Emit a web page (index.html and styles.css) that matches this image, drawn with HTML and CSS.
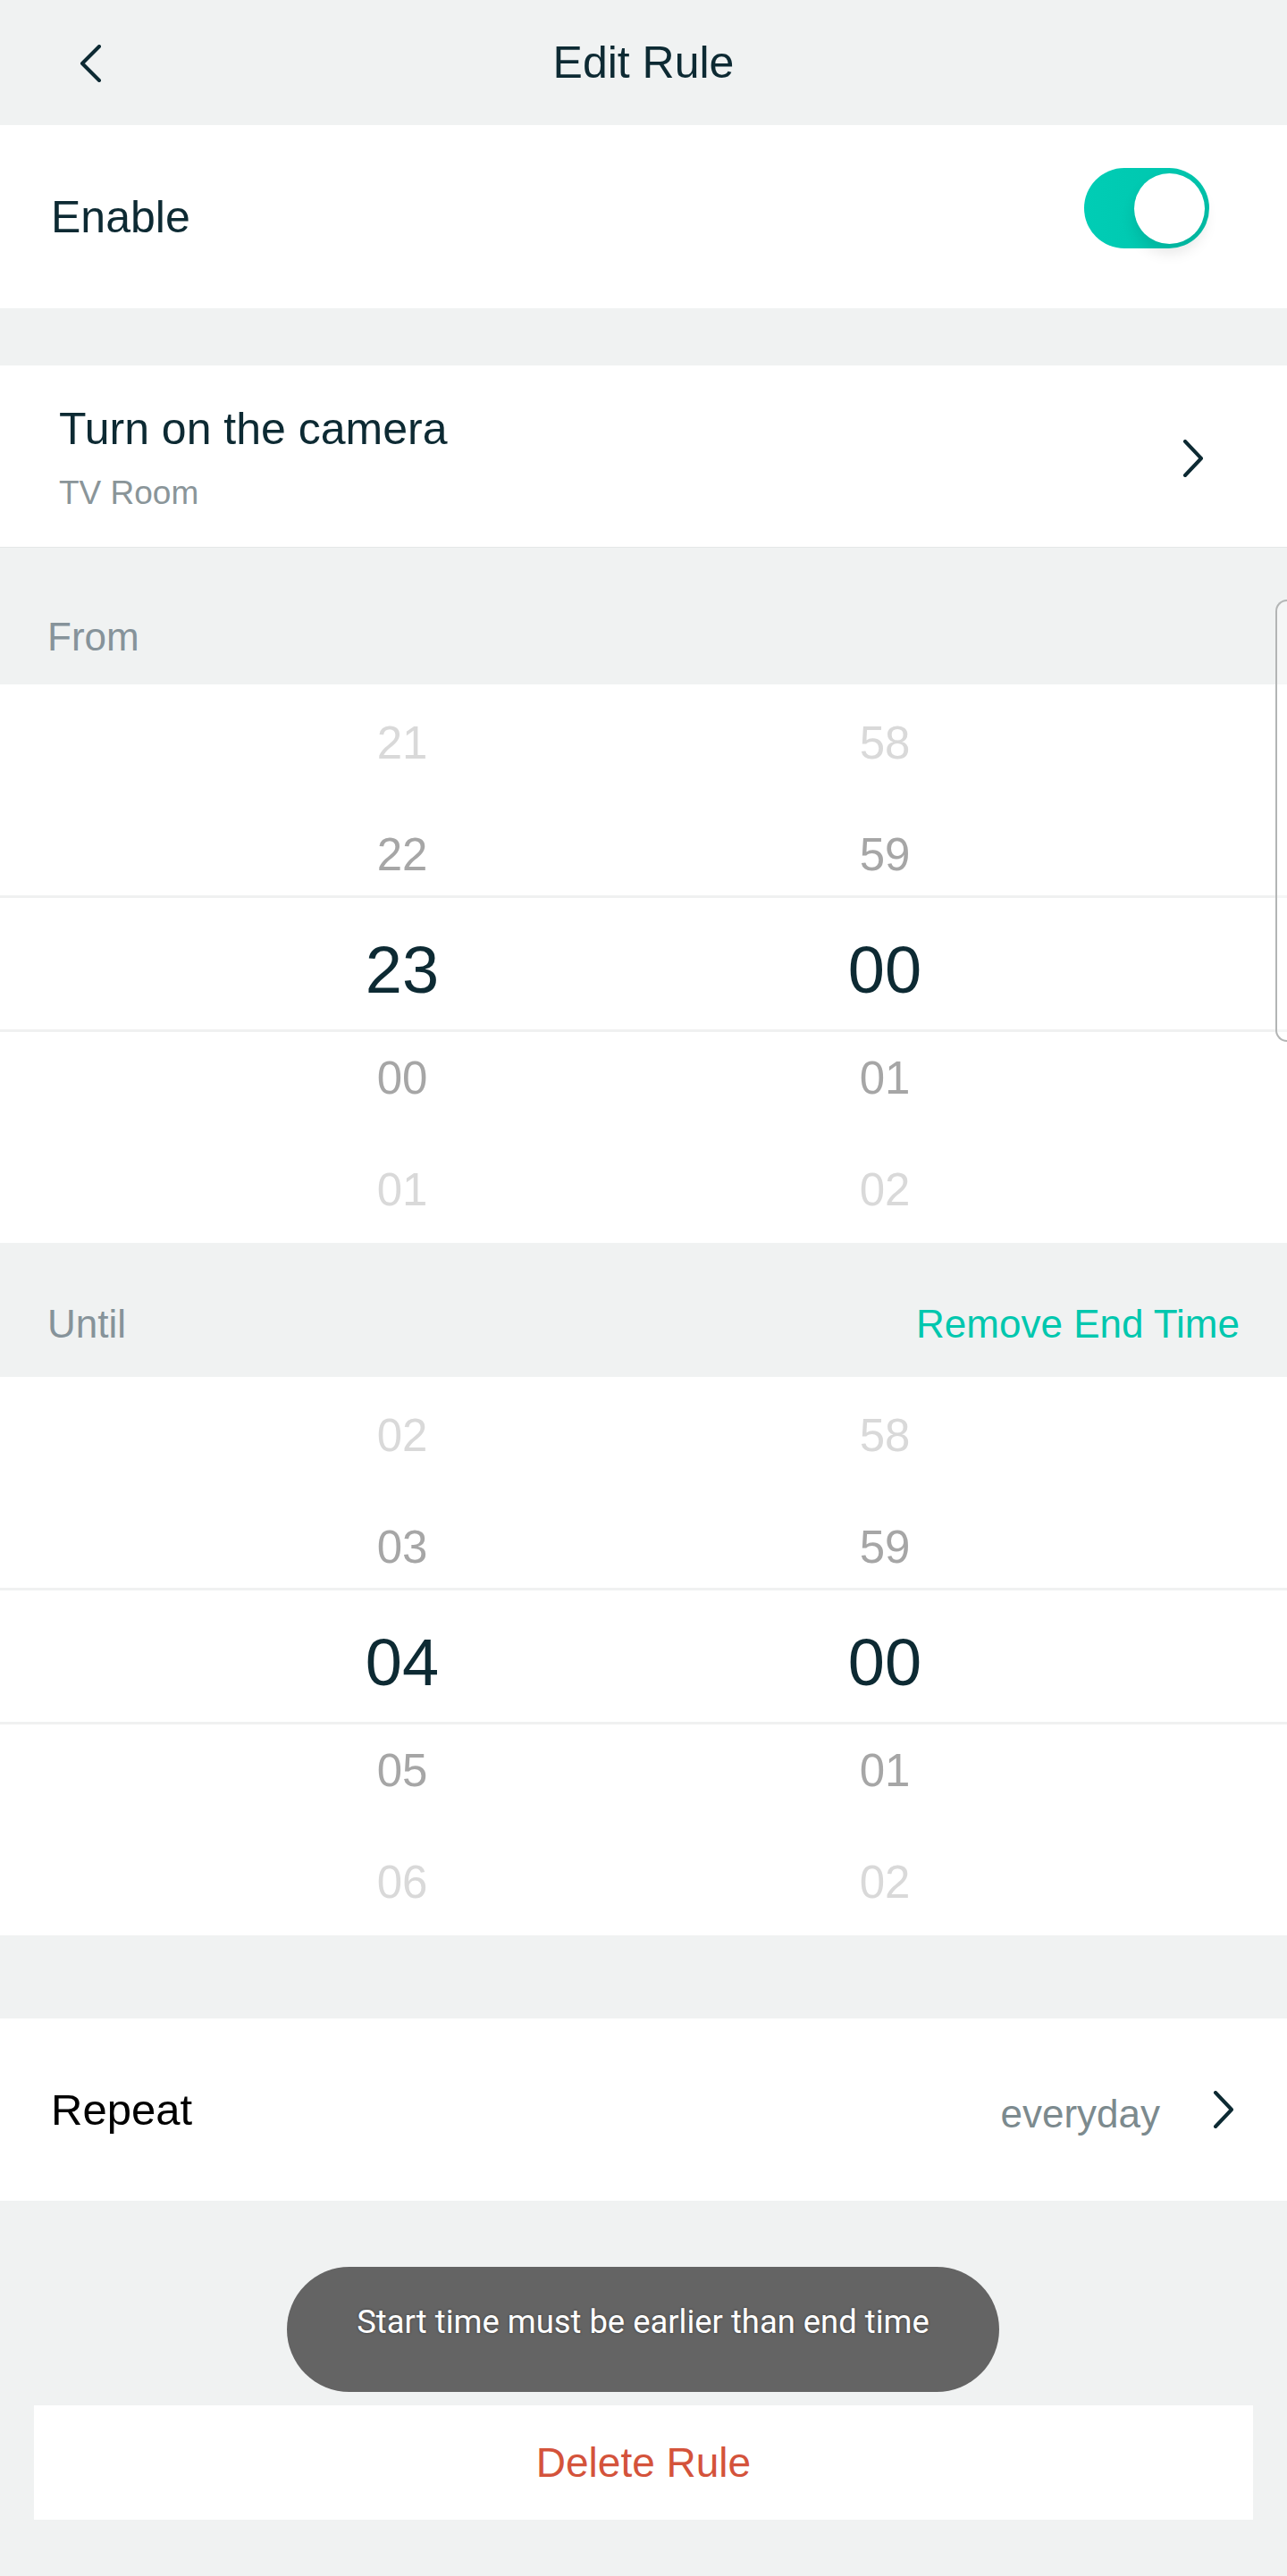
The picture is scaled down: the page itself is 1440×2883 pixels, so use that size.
FILE: index.html
```html
<!DOCTYPE html>
<html lang="en">
<head>
<meta charset="utf-8">
<title>Edit Rule</title>
<link rel="stylesheet" href="styles.css">
</head>
<body>
<div class="screen">
  <header class="topbar">
    <svg class="back" width="26" height="42" viewBox="0 0 26 42"><path d="M22 2 L3 21 L22 40" fill="none" stroke="#0d2a33" stroke-width="4" stroke-linecap="round" stroke-linejoin="round"/></svg>
    <h1 class="title">Edit Rule</h1>
    <span></span>
  </header>

  <section class="card enable-row">
    <span class="row-title">Enable</span>
    <div class="toggle"><div class="knob"></div></div>
  </section>

  <section class="card action-row">
    <div class="action-text">
      <div class="row-title">Turn on the camera</div>
      <div class="subtitle">TV Room</div>
    </div>
    <svg class="chev" width="26" height="42" viewBox="0 0 26 42"><path d="M4 2 L22 21 L4 40" fill="none" stroke="#0d2a33" stroke-width="4" stroke-linecap="round" stroke-linejoin="round"/></svg>
  </section>

  <div class="label-row from-label"><span class="label">From</span></div>

  <div class="picker">
    <div class="col">
      <div class="cell far">21</div>
      <div class="cell near">22</div>
      <div class="cell sel">23</div>
      <div class="cell near">00</div>
      <div class="cell far">01</div>
    </div>
    <div class="col">
      <div class="cell far">58</div>
      <div class="cell near">59</div>
      <div class="cell sel">00</div>
      <div class="cell near">01</div>
      <div class="cell far">02</div>
    </div>
    <div class="sel-line top"></div>
    <div class="sel-line bottom"></div>
  </div>

  <div class="label-row until-label"><span class="label">Until</span><span class="link">Remove End Time</span></div>

  <div class="picker">
    <div class="col">
      <div class="cell far">02</div>
      <div class="cell near">03</div>
      <div class="cell sel">04</div>
      <div class="cell near">05</div>
      <div class="cell far">06</div>
    </div>
    <div class="col">
      <div class="cell far">58</div>
      <div class="cell near">59</div>
      <div class="cell sel">00</div>
      <div class="cell near">01</div>
      <div class="cell far">02</div>
    </div>
    <div class="sel-line top"></div>
    <div class="sel-line bottom"></div>
  </div>

  <section class="card repeat-row">
    <span class="repeat-title">Repeat</span>
    <div class="repeat-value">
      <span class="value">everyday</span>
      <svg class="chev" width="26" height="42" viewBox="0 0 26 42"><path d="M4 2 L22 21 L4 40" fill="none" stroke="#0d2a33" stroke-width="4" stroke-linecap="round" stroke-linejoin="round"/></svg>
    </div>
  </section>

  <div class="delete">Delete Rule</div>

  <div class="toast">Start time must be earlier than end time</div>
  <div class="edge-handle"></div>
</div>
</body>
</html>
```

FILE: styles.css
```css
* { box-sizing: border-box; }

html, body {
  margin: 0;
  padding: 0;
  background: #f0f2f2;
}

body {
  font-family: "Liberation Sans", Arial, sans-serif;
  color: #0d2a33;
}

.screen {
  position: relative;
  width: 1440px;
  min-height: 2883px;
  background: #f0f2f2;
}

.topbar {
  height: 140px;
  display: grid;
  grid-template-columns: 1fr auto 1fr;
  align-items: center;
}

.back {
  margin-left: 89px;
  margin-top: 2px;
}

.title {
  margin: 0;
  font-size: 50px;
  font-weight: 400;
  line-height: 60px;
  color: #0d2a33;
}

.card {
  background: #ffffff;
}

.row-title {
  font-size: 50px;
  line-height: 60px;
  color: #0d2a33;
}

.enable-row {
  height: 205px;
  display: flex;
  align-items: center;
  justify-content: space-between;
  padding: 0 87px 0 57px;
}

.toggle {
  width: 140px;
  height: 90px;
  border-radius: 45px;
  background: linear-gradient(90deg, #00cdb5 0%, #00c8b0 60%, #00c2aa 100%);
  margin-bottom: 19px;
  display: flex;
  align-items: center;
  justify-content: flex-end;
  padding-right: 5px;
}

.knob {
  width: 79px;
  height: 79px;
  border-radius: 50%;
  background: #ffffff;
  box-shadow: 0 10px 16px rgba(0, 0, 0, 0.10);
}

.action-row {
  margin-top: 64px;
  height: 204px;
  border-bottom: 1px solid #e4e7e7;
  display: flex;
  align-items: flex-start;
  justify-content: space-between;
  padding: 41px 92px 0 66px;
}

.action-text {
  display: flex;
  flex-direction: column;
  gap: 20px;
}

.subtitle {
  font-size: 37px;
  line-height: 44px;
  color: #8a9599;
}

.action-row .chev {
  margin-top: 42px;
}

.label-row {
  display: flex;
  align-items: flex-end;
  justify-content: space-between;
  padding-left: 53px;
  padding-right: 53px;
}

.from-label {
  height: 153px;
  padding-bottom: 27px;
}

.until-label {
  height: 150px;
  padding-bottom: 33px;
}

.label {
  font-size: 44px;
  line-height: 52px;
  color: #86939a;
}

.link {
  font-size: 44px;
  line-height: 52px;
  color: #00c7ae;
}

.picker {
  position: relative;
  height: 625px;
  background: #ffffff;
  display: grid;
  grid-template-columns: 1fr 1fr;
  padding: 0 180px;
}

.col {
  display: flex;
  flex-direction: column;
}

.cell {
  height: 125px;
  text-align: center;
  padding-top: 6px;
  line-height: 119px;
  font-size: 51px;
}

.cell.far { color: #d9d9d9; }
.cell.near { color: #a6a6a6; }

.cell.sel {
  padding-top: 14px;
  line-height: 111px;
  font-size: 74px;
  color: #0d2a33;
}

.sel-line {
  position: absolute;
  left: 0;
  right: 0;
  height: 3px;
  background: #f0f1f1;
}

.sel-line.top { top: 236px; }
.sel-line.bottom { top: 386px; }

.repeat-row {
  margin-top: 93px;
  height: 204px;
  display: flex;
  align-items: center;
  justify-content: space-between;
  padding: 0 58px 0 57px;
}

.repeat-title {
  font-size: 49px;
  line-height: 60px;
  color: #000000;
}

.repeat-value {
  display: flex;
  align-items: center;
  gap: 58px;
}

.value {
  font-size: 44px;
  line-height: 52px;
  color: #7c8a8e;
  margin-top: 10px;
}

.delete {
  margin: 229px 38px 0;
  height: 128px;
  background: #ffffff;
  display: flex;
  align-items: center;
  justify-content: center;
  font-size: 46px;
  color: #d4533b;
}

.toast {
  position: absolute;
  left: 321px;
  top: 2537px;
  width: 797px;
  height: 140px;
  border-radius: 70px;
  background: #646464;
  color: #ffffff;
  font-family: Roboto, "Liberation Sans", sans-serif;
  font-size: 36.4px;
  display: flex;
  align-items: center;
  justify-content: center;
  padding-bottom: 18px;
  text-shadow: 0 0 3px rgba(0, 0, 0, 0.45);
}

.edge-handle {
  position: absolute;
  right: 0;
  top: 671px;
  width: 13px;
  height: 495px;
  border: 2px solid #b3b5b5;
  border-right: none;
  border-radius: 14px 0 0 14px;
  background: rgba(255, 255, 255, 0.35);
}
```
